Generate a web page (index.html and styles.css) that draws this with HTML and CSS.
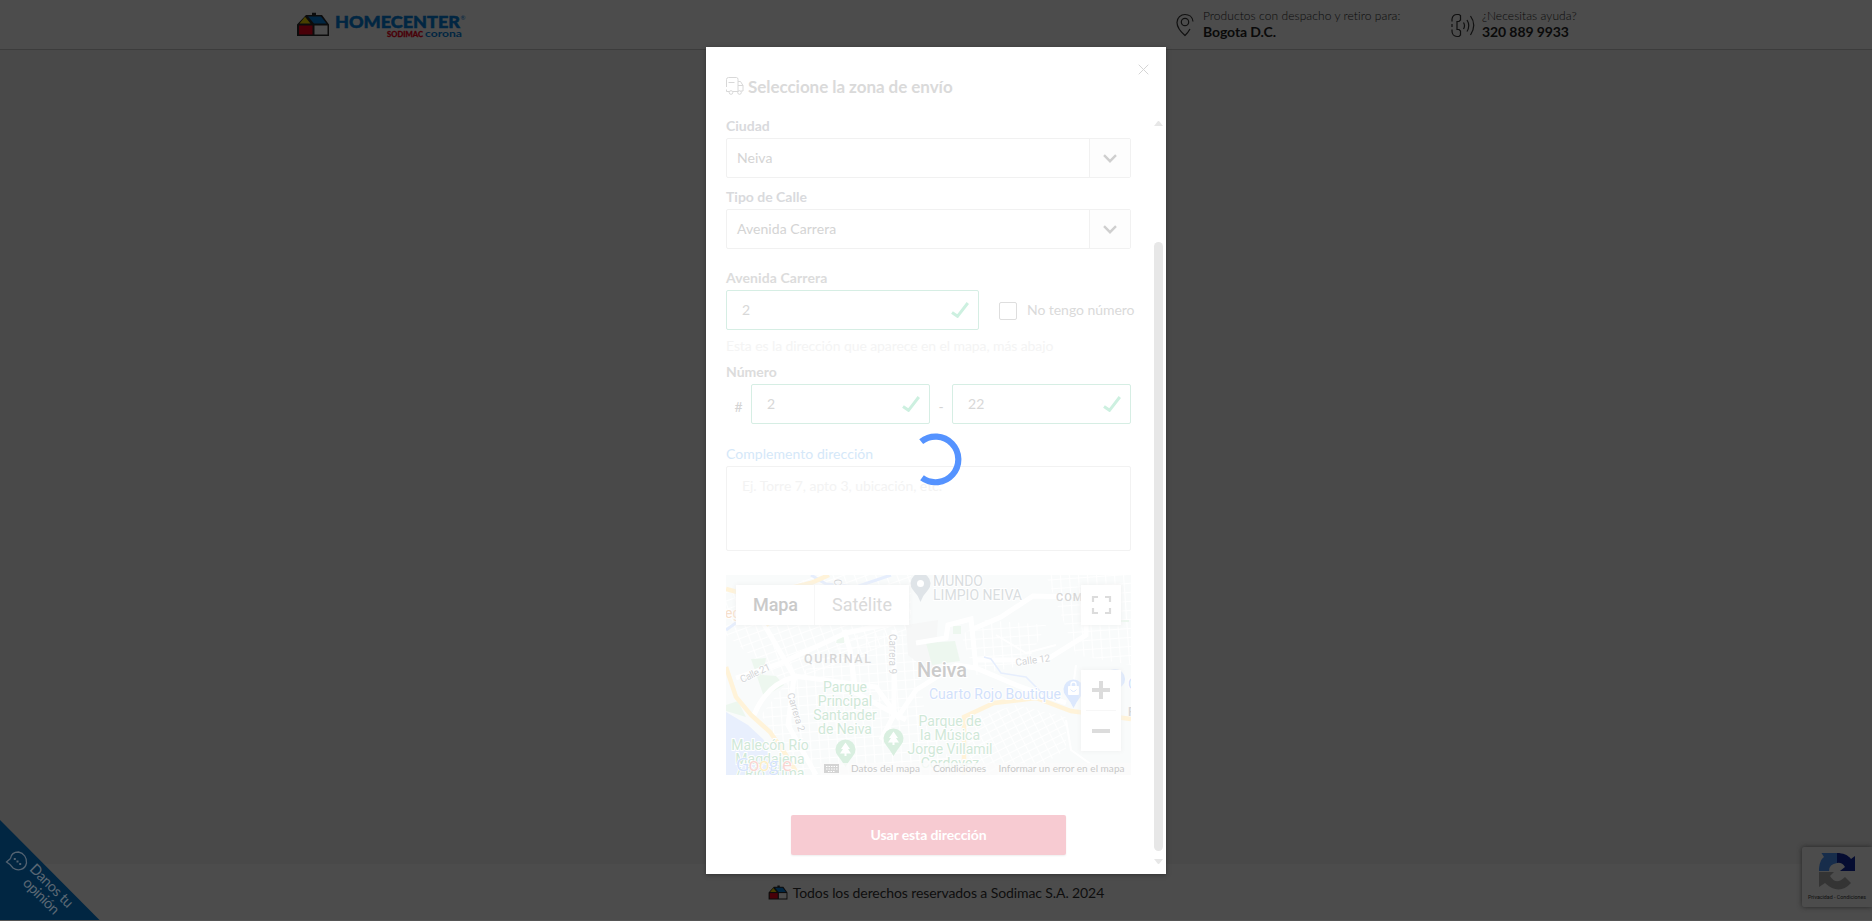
FILE: index.html
```html
<!DOCTYPE html>
<html lang="es">
<head>
<meta charset="utf-8">
<title>Homecenter</title>
<link rel="stylesheet" href="styles.css">
</head>
<body>
<svg class="defs" width="0" height="0">
  <defs>
    <symbol id="house" viewBox="0 0 34 25">
      <path d="M1 12.500 10 3h6V.8h4V3h6l7 9.500V24H1z" fill="#0c0c0c"/>
      <path d="M3.500 11.500 9 4.800l5.500 6.700z" fill="#484000"/>
      <path d="M12 4.500h13l5.500 7H18z" fill="#012642"/>
      <path d="M3 13.500h13.500v9H3z" fill="#490008"/>
      <path d="M18.500 13.500h13v9h-13z" fill="#4c4c4c"/>
    </symbol>
    <symbol id="check" viewBox="0 0 18 16">
      <path d="M1 10.500 6.500 14.300 16.800 1" fill="none" stroke="#cdf0e0" stroke-width="3"/>
    </symbol>
    <symbol id="chev" viewBox="0 0 14 9">
      <path d="M1 1.200 7 7.200 13 1.200" fill="none" stroke="#cfcfcf" stroke-width="2.400"/>
    </symbol>
  </defs>
</svg>

<div class="page">
  <header class="header">
    <div class="brand">
      <svg class="brand-house" width="34" height="25"><use href="#house"/></svg>
      <svg class="brand-name" width="132" height="26" viewBox="0 0 132 26">
        <text class="brand-main" x="1" y="14.500" textLength="125" lengthAdjust="spacingAndGlyphs">HOMECENTER</text>
        <text class="brand-reg" x="126.500" y="7">®</text>
        <text class="brand-sodimac" x="53" y="23.500" textLength="36" lengthAdjust="spacingAndGlyphs">SODIMAC</text>
        <text class="brand-corona" x="91" y="23.500" textLength="37" lengthAdjust="spacingAndGlyphs">corona</text>
      </svg>
    </div>
    <div class="head-item head-zone">
      <svg width="18" height="24" viewBox="0 0 18 24" fill="none" stroke="#101010" stroke-width="1.200">
        <path d="M17 8.500C16.500 4 13 1.500 9 1.500S1 4.500 1 9.500c0 4.500 4 9.500 8 13 2-1.700 3.700-4.200 5-6.500"/>
        <circle cx="9" cy="9" r="3.700"/>
      </svg>
      <div class="head-text"><span class="head-small">Productos con despacho y retiro para:</span><b class="head-bold">Bogota D.C.</b></div>
    </div>
    <div class="head-item">
      <svg width="25" height="25" viewBox="0 0 25 25" fill="none" stroke="#101010" stroke-width="1.200">
        <path d="M2 8.500V6C2.500 3 4.500 1.500 7 1.500h2l1.500 1v4.500L9 8.500H7v8h2l1.500 1.500v4L9 23.500H7C4 23.500 2 21 2 18v-1.500M2 11v3"/>
        <path d="M13.500 9.500q2 3.200 0 6.500M17 7q3.500 5.500 0 11.500M20.500 3q6.500 9 0 19"/>
      </svg>
      <div class="head-text"><span class="head-small">¿Necesitas ayuda?</span><b class="head-bold">320 889 9933</b></div>
    </div>
  </header>
  <main class="main"></main>
  <footer class="footer">
    <svg width="20" height="15" viewBox="0 0 34 25" preserveAspectRatio="none"><use href="#house"/></svg>
    <span>Todos los derechos reservados a Sodimac S.A. 2024</span>
  </footer>
</div>

<aside class="feedback">
  <svg width="100" height="101" viewBox="0 0 100 101">
    <path d="M0 0 99.500 100H0z" fill="#012642"/>
    <g transform="translate(6 31)" fill="none" stroke="#536271" stroke-width="1.300">
      <path d="M4.500 7.500Q5.500 1 12.500 1C18 2 21 7 20.500 12 19 19 12 20.500 7 17L4 13.500 0.500 11 4.500 7.500"/>
      <path d="M7.800 8h2M10.500 10.500h2M13.200 13h2" stroke-width="1.900"/>
    </g>
    <g class="feedback-text" transform="rotate(45)">
      <text x="55.500" y="15" textLength="55">Danos tu</text>
      <text x="60.500" y="29.500" textLength="45">opinión</text>
    </g>
  </svg>
</aside>

<aside class="captcha">
  <svg width="38" height="40" viewBox="0 0 38 40">
    <path d="M1 19C1 12 3 7 6 5L3.500 1H19v10q-8 1-8 8z" fill="#172d4b"/>
    <path d="M19 1C25 1 30 3 33 7l4-3v15H22l5-4q-3-5-8-4z" fill="#050c31"/>
    <path d="M1 20h15l-4 4q6 10 15 1l6 6Q21 44 7 31l-6 4z" fill="#343434"/>
  </svg>
  <span>Privacidad - Condiciones</span>
</aside>

<section class="modal">
  <div class="modal-head">
    <svg class="close" width="11" height="11" viewBox="0 0 11 11"><path d="M.7.700l9.600 9.600M10.300.700.700 10.300" stroke="#d5d5d5" fill="none"/></svg>
    <div class="title">
      <svg width="18" height="18" viewBox="0 0 18 18" fill="none" stroke="#d8d8d8">
        <path d="M.5 10V2.500q0-2 2-2h8q1.500 0 1.500 2V14.500M2.500 5.500h6M12 4.500h2.500l2.500 4v5.500H15M12 8.500h5M.5 12.500v2H3M7 14.500h5"/>
        <circle cx="5" cy="15.500" r="1.800"/><circle cx="13.500" cy="15.500" r="1.800"/>
      </svg>
      <h1>Seleccione la zona de envío</h1>
    </div>
  </div>
  <div class="modal-body">
    <form class="form">
      <label class="label">Ciudad</label>
      <div class="select"><span>Neiva</span><i class="arrow"><svg width="14" height="9"><use href="#chev"/></svg></i></div>
      <label class="label label-street">Tipo de Calle</label>
      <div class="select"><span>Avenida Carrera</span><i class="arrow"><svg width="14" height="9"><use href="#chev"/></svg></i></div>
      <label class="label label-avenue">Avenida Carrera</label>
      <div class="row">
        <div class="input input-wide"><span>2</span><svg width="18" height="16"><use href="#check"/></svg></div>
        <i class="box"></i><span class="box-text">No tengo número</span>
      </div>
      <p class="hint">Esta es la dirección que aparece en el mapa, más abajo</p>
      <label class="label label-number">Número</label>
      <div class="row">
        <span class="sym sym-hash">#</span>
        <div class="input"><span>2</span><svg width="18" height="16"><use href="#check"/></svg></div>
        <span class="sym sym-dash">-</span>
        <div class="input"><span>22</span><svg width="18" height="16"><use href="#check"/></svg></div>
      </div>
      <label class="label label-extra">Complemento dirección</label>
      <div class="area">Ej. Torre 7, apto 3, ubicación, etc.</div>

      <svg class="map" width="405" height="200" viewBox="0 0 405 200">
        <defs>
          <pattern id="gridA" width="10" height="8" patternUnits="userSpaceOnUse" patternTransform="rotate(-20)"><path d="M0 0H10M0 0V8" stroke="#fff" stroke-width="2.200"/></pattern>
          <pattern id="gridB" width="9" height="9" patternUnits="userSpaceOnUse" patternTransform="rotate(-4)"><path d="M0 0H9M0 0V9" stroke="#fff" stroke-width="2.200"/></pattern>
          <pattern id="gridC" width="9" height="7" patternUnits="userSpaceOnUse" patternTransform="rotate(-27)"><path d="M0 0H9M0 0V7" stroke="#fff" stroke-width="2"/></pattern>
        </defs>
        <rect width="405" height="200" fill="#f9fbfb"/>
        <path d="M0 12 40 20 90 0H185V60L60 110 0 60z" fill="url(#gridA)"/>
        <path d="M60 108 130 60 190 55 200 150 235 200H75L35 140z" fill="url(#gridB)"/>
        <path d="M235 60 260 45 320 50 300 90 250 100z" fill="url(#gridB)"/>
        <path d="M240 145 290 130 340 142V175L300 200H245z" fill="url(#gridC)"/>
        <path d="M320 0H405V90L350 80z" fill="url(#gridB)"/>
        <path d="M180 50 212 45 208 100 182 80z" fill="#f6f7f7"/>
        <path d="M0 137 22 150 38 165 42 178 66 200H0z" fill="#e8effd"/>
        <path d="M0 55 18 42M85 0 100 9 130 12 165 0" fill="none" stroke="#e6eefd" stroke-width="3"/>
        <path d="M37 100 50 101 58 110 38 122 25 84 40 83M112 62 118 60V68H110zM0 130 12 126 20 142 0 136z" fill="#edf7ef"/>
        <path d="M200 68 229 66 234 86 206 90zM227 51h8v8h-8zM386 45h17v2h-17z" fill="#edf7ef"/>
        <g fill="none" stroke="#fff" stroke-width="5">
          <path d="M35 44 68 101 150 112 172 142 190 115 230 90 250 93"/>
          <path d="M10 103 55 88 120 58 182 45M118 55 124 75 130 118 180 145"/>
          <path d="M168 55V140L155 165M28 140Q40 110 68 102L62 150 90 200"/>
          <path d="M190 68 220 63 222 50 245 44 250 93 290 110 340 128M247 54 275 42 307 21 345 22"/>
          <path d="M250 85 320 85 360 60V10"/>
          <path d="M340 145 345 175 380 200M270 60 300 78 330 70M350 90 345 128" stroke-width="2"/>
        </g>
        <path d="M258 82 265 84 275 98 300 102 318 120 330 125" fill="none" stroke="#e6eefd" stroke-width="1.500"/>
        <g fill="none" stroke="#fff3d9" stroke-width="4.500">
          <path d="M0 92 10 122 25 140 44 157 60 180 72 200M0 14 22 20M40 50 62 35M60 14 85 8 103 0"/>
          <path d="M238 200V142L268 128 310 123 345 136 405 144"/>
        </g>
        <g class="poi poi-green" text-anchor="middle">
          <text x="119" y="117">Parque</text><text x="119" y="131">Principal</text><text x="119" y="145">Santander</text><text x="119" y="159">de Neiva</text>
          <text x="44" y="175">Malecón Río</text><text x="44" y="189">Magdalena</text><text x="44" y="203">/ Río Yuma</text>
          <text x="224" y="151">Parque de</text><text x="224" y="165">la Música</text><text x="224" y="179">Jorge Villamil</text><text x="224" y="193">Cordovez</text>
        </g>
        <text class="poi poi-blue" x="203" y="124" textLength="132">Cuarto Rojo Boutique</text>
        <text class="poi poi-blue" x="402" y="114">C</text>
        <text class="poi poi-orange" x="-1" y="43">eg</text>
        <g class="poi poi-grey"><text x="207" y="11" textLength="50">MUNDO</text><text x="207" y="25" textLength="89">LIMPIO NEIVA</text></g>
        <text class="area-name" x="78" y="88" textLength="67">QUIRINAL</text>
        <text class="area-name area-com" x="330" y="26">COM</text>
        <text class="area-name" x="402" y="141">F</text>
        <text class="city" x="191" y="102" textLength="50">Neiva</text>
        <g class="street">
          <text transform="translate(16 108) rotate(-25)" textLength="32">Calle 21</text>
          <text transform="translate(290 91) rotate(-8)" textLength="35">Calle 12</text>
          <text transform="translate(163 59) rotate(90)" textLength="40">Carrera 9</text>
          <text transform="translate(61 119) rotate(73)" textLength="40">Carrera 2</text>
          <text transform="translate(108 4) rotate(90)">C</text>
        </g>
        <g fill="#d9efe0"><path id="pin" d="M119.500 192Q116 186 112 181A10 10 0 1 1 127 181Q123 186 119.500 192z"/><use href="#pin" x="48" y="-11"/></g>
        <path id="tree" d="M119.500 167.500 124 174H122L125 178.500H120.500V181H118.500V178.500H114L117 174H115z" fill="#fff"/><use href="#tree" x="48" y="-11"/>
        <path d="M194.500 27Q192 20 187 15A10 10 0 1 1 202 15Q197 20 194.500 27z" fill="#dfe4e8"/><circle cx="194.500" cy="8.500" r="3.500" fill="#fff"/>
        <path d="M347.500 133Q344 126 340 121A10 10 0 1 1 355 121Q351 126 347.500 133z" fill="#dce8fd"/>
        <path d="M342.500 111.500H352.500V119.500H342.500z" fill="#fff" stroke="#fff"/>
        <path d="M345 111V109.500A2.500 2.500 0 0 1 350 109.500V111" fill="none" stroke="#fff" stroke-width="1.300"/>
        <path d="M344.500 114.500Q347.500 118.500 350.500 114.500" fill="none" stroke="#dce8fd"/>
        <circle cx="389" cy="104" r="10" fill="#dce8fd"/>
        <path d="M94 188H405V200H94z" fill="#fbfbfb" opacity=".8"/>
        <text class="google" x="10" y="196" textLength="56"><tspan fill="#d5e3fc">G</tspan><tspan fill="#f9d5d2">o</tspan><tspan fill="#fdeec4">o</tspan><tspan fill="#d5e3fc">g</tspan><tspan fill="#d2ecd8">l</tspan><tspan fill="#f9d5d2">e</tspan></text>
        <path d="M98 189h15v9H98z" fill="#d4d4d4"/><path d="M100 191.500h11.500M100 194h11.500M102 196.500h7" stroke="#fff" stroke-dasharray="1.500 1"/>
        <g class="legal"><text x="125" y="197" textLength="69">Datos del mapa</text><text x="207" y="197" textLength="53">Condiciones</text><text x="272.500" y="197" textLength="126">Informar un error en el mapa</text></g>
        <g class="controls"><rect x="10" y="10" width="173" height="40"/><rect x="355" y="10" width="40" height="40"/><rect x="355" y="95" width="40" height="81"/></g>
        <path d="M88.500 10V50M360 135.500H390" stroke="#f7f7f7"/>
        <text class="tab tab-on" x="27" y="36" textLength="45">Mapa</text>
        <text class="tab" x="106" y="36" textLength="60">Satélite</text>
        <path d="M367 27V22H372M379 22H384V27M384 33V38H379M372 38H367V33" fill="none" stroke="#dcdcdc" stroke-width="2.200"/>
        <path d="M366 115H384M375 106V124M366 156H384" stroke="#dcdcdc" stroke-width="4"/>
      </svg>
      <button class="submit" type="button">Usar esta dirección</button>
    </form>
    <div class="scroll"><i class="up"></i><i class="thumb"></i><i class="down"></i></div>
  </div>
  <svg class="spinner" width="54" height="54" viewBox="0 0 54 54"><path d="M12.200 9.700A22.800 22.800 0 1 1 13 45.800" fill="none" stroke="#5593ff" stroke-width="6.200"/></svg>
</section>
</body>
</html>
```
FILE: styles.css
```css
* { box-sizing: border-box; }
body { margin: 0; background: #494949; font-family: Lato, sans-serif; font-size: 14px; overflow: hidden; }
.defs { position: absolute; }
.page { display: flex; flex-direction: column; height: 921px; }
.header { height: 50px; background: #4c4c4c; border-bottom: 1px solid #3c3c3c; display: flex; align-items: flex-start; padding: 11px 0 0 296px; }
.brand { display: flex; width: 880px; gap: 4px; }
.brand-house { margin-top: 1px; }
.brand-name { margin-top: 2px; overflow: visible; }
.brand-main { font: 900 17px Lato, sans-serif; fill: #012642; stroke: #012642; stroke-width: .5px; }
.brand-reg { font: 6px Lato, sans-serif; fill: #012642; }
.brand-sodimac { font: 900 8px Lato, sans-serif; fill: #490008; stroke: #490008; stroke-width: .3px; }
.brand-corona { font: 700 10px Lato, sans-serif; fill: #012642; }
.head-item { display: flex; gap: 7px; }
.head-item > svg { margin-top: 2px; }
.head-zone { width: 274px; gap: 9px; }
.head-text { display: flex; flex-direction: column; color: #0a0a0a; white-space: nowrap; margin-top: -3px; }
.head-small { font-size: 12px; line-height: 16px; font-weight: 300; letter-spacing: .07px; }
.head-bold { font-size: 14px; line-height: 16px; font-weight: 700; letter-spacing: -.1px; }
.main { flex: 1; }
.footer { height: 57px; background: #4c4c4c; border-bottom: 1px solid #555; display: flex; align-items: center; justify-content: center; gap: 5px; color: #0e0e0e; letter-spacing: -.1px; }
.feedback { position: absolute; left: 0; top: 820px; }
.feedback-text { font: 14.500px Lato, sans-serif; fill: #5b6874; }
.captcha { position: absolute; left: 1802px; top: 847px; width: 70px; height: 60px; border-radius: 2px 0 0 2px; background: #4c4c4c; box-shadow: 0 0 5px #252525; display: flex; flex-direction: column; align-items: center; padding-top: 5px; }
.captcha span { font: 5.300px/10px Roboto, sans-serif; color: #0e0e0e; white-space: nowrap; }
.modal { position: absolute; left: 706px; top: 47px; width: 460px; height: 827px; background: #fff; box-shadow: 0 1px 4px #333; display: flex; flex-direction: column; }
.modal-head { height: 68px; padding: 17px 17px 0 20px; display: flex; flex-direction: column; }
.close { align-self: flex-end; }
.title { display: flex; gap: 4px; align-items: center; margin-top: -1px; }
.title h1 { margin: 2px 0 0; font-size: 17px; line-height: 22px; font-weight: 700; color: #dadada; letter-spacing: -.05px; }
.modal-body { display: flex; flex: 1; }
.form { width: 405px; margin-left: 20px; display: flex; flex-direction: column; }
.label { font-weight: 700; color: #d9dadd; line-height: 17px; height: 17px; margin: 2px 0 4px; }
.select { height: 40px; border: 1px solid #f1f1f1; border-radius: 2px; display: flex; align-items: center; padding-left: 10px; color: #d4d4d4; }
.select > span, .input > span { margin-top: -2px; letter-spacing: .05px; }
.label-street { margin: 10px 0 4px; }
.arrow { margin-left: auto; width: 41px; height: 38px; border-left: 1px solid #f1f1f1; background: #fdfdfd; display: flex; align-items: center; justify-content: center; }
.label-avenue { margin: 20px 0 4px; color: #dcdcdc; letter-spacing: .1px; }
.row { display: flex; height: 40px; align-items: center; white-space: nowrap; }
.input { flex: none; width: 179px; height: 40px; border: 1px solid #d6eee4; border-radius: 2px; padding: 0 9px 0 15px; display: flex; align-items: center; justify-content: space-between; color: #d8d8d8; }
.input-wide { width: 253px; }
.box { width: 18px; height: 18px; border: 1px solid #dedede; border-radius: 2px; margin: 2px 10px 0 20px; flex: none; }
.box-text { color: #dadada; margin-top: -2px; letter-spacing: -.05px; }
.hint { margin: 7px 0 0; line-height: 17px; color: #f4f4f4; letter-spacing: -.09px; }
.label-number { margin: 9px 0 4px; color: #dcdcdc; }
.sym { color: #d4d4d4; text-align: center; padding-top: 4px; }
.sym-hash { width: 25px; }
.sym-dash { width: 22px; }
.label-extra { margin: 21px 0 4px; font-weight: 400; color: #d5e8f9; letter-spacing: .05px; }
.area { height: 85px; border: 1px solid #f2f2f2; border-radius: 2px; padding: 10px 15px; line-height: 17px; color: #f3f3f3; letter-spacing: -.05px; }
.map { margin-top: 24px; display: block; }
.submit { margin: 40px 0 0 65px; width: 275px; height: 40px; border: 0; border-radius: 2px; background: #f7cbd2; box-shadow: 0 1px 2px #eee; color: #fff; font: 700 14px Lato, sans-serif; letter-spacing: -.1px; padding: 0 0 2px; }
.scroll { width: 9px; margin: 6px 0 10px 23px; display: flex; flex-direction: column; }
.up { border: 4.500px solid transparent; border-top: 0; border-bottom: 5px solid #e7e7e7; }
.thumb { height: 609px; margin: 116px 0 8px; border-radius: 4.500px; background: #e7e7e7; }
.down { border: 4.500px solid transparent; border-bottom: 0; border-top: 5px solid #e7e7e7; }
.spinner { position: absolute; left: 203px; top: 385px; }
.poi { font: 14px Roboto, sans-serif; stroke: #fff; stroke-width: 2px; paint-order: stroke; }
.poi-green { fill: #d0e8d8; }
.poi-blue { fill: #d2e1fb; }
.poi-orange { fill: #f7dfcb; }
.poi-grey { fill: #d9dde0; }
.area-name { font: 500 12.500px Roboto, sans-serif; fill: #d6d6d6; }
.area-com { font-size: 11px; letter-spacing: 1px; }
.city { font: 500 20px Roboto, sans-serif; fill: #cbcbcb; stroke: #fff; stroke-width: 2px; paint-order: stroke; }
.street { font: 10px Roboto, sans-serif; fill: #d4d6d8; stroke: #fff; stroke-width: 1.500px; paint-order: stroke; }
.google { font: 500 18px "Open Sans", sans-serif; stroke: #fff; stroke-width: 1px; paint-order: stroke; }
.legal { font: 10px Lato, sans-serif; fill: #c8c8c8; }
.controls { fill: #fff; filter: drop-shadow(0 0 2px #eee); }
.tab { font: 18px Roboto, sans-serif; fill: #dadada; }
.tab-on { font-weight: 500; fill: #cacaca; }
```
